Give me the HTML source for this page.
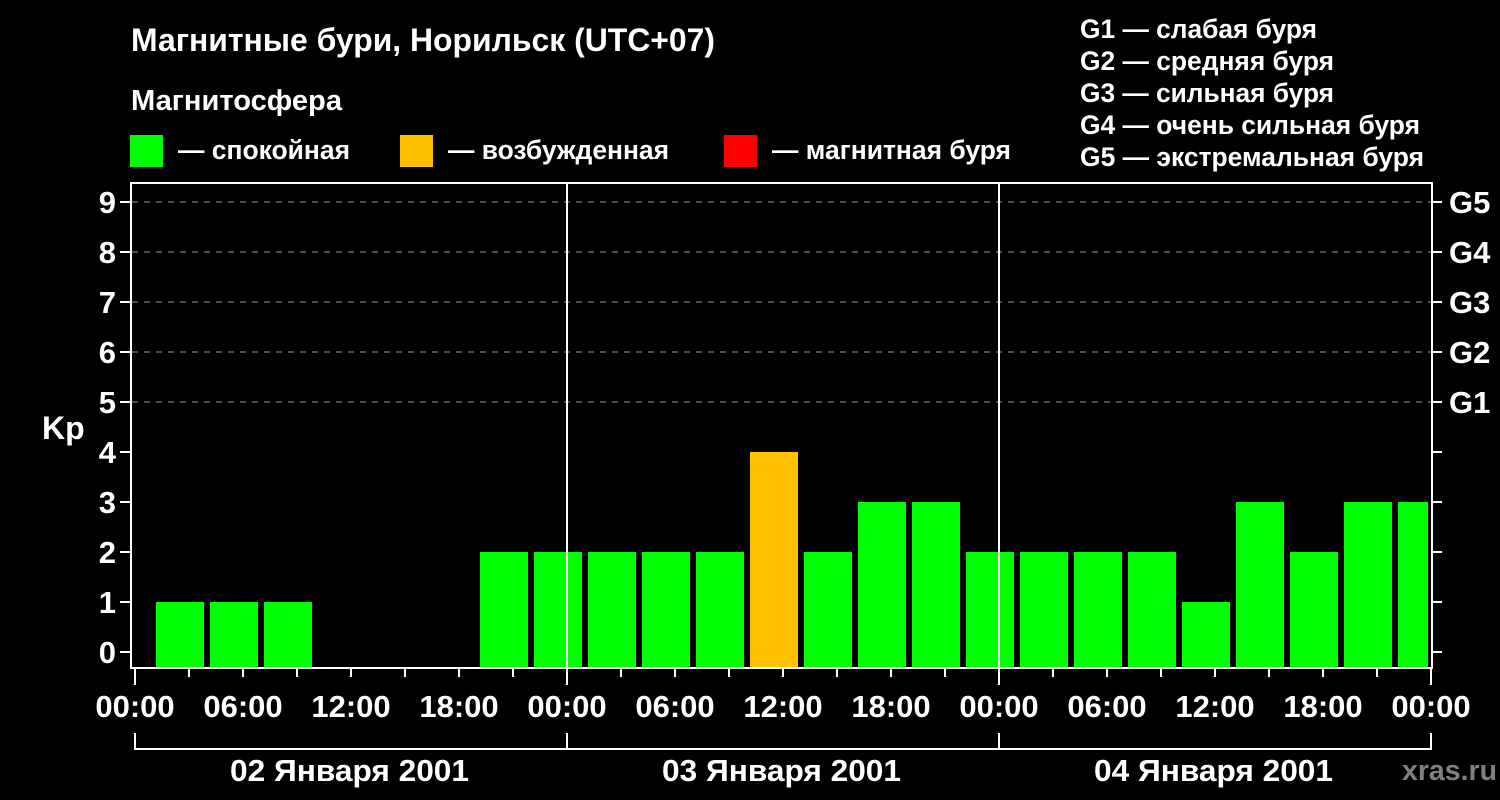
<!DOCTYPE html><html><head><meta charset="utf-8"><style>body{margin:0;background:#000}svg{display:block}text{font-family:"Liberation Sans",Arial,sans-serif;font-weight:bold;fill:#fff}</style></head><body>
<svg width="1500" height="800" viewBox="0 0 1500 800">
<rect width="1500" height="800" fill="#000"/>
<text x="131" y="51" font-size="32" textLength="584" lengthAdjust="spacingAndGlyphs">Магнитные бури, Норильск (UTC+07)</text>
<text x="131" y="110" font-size="29" textLength="211" lengthAdjust="spacingAndGlyphs">Магнитосфера</text>
<rect x="130" y="135" width="33" height="32" fill="#00ff00"/><text x="178" y="159" font-size="27" textLength="172" lengthAdjust="spacingAndGlyphs">— спокойная</text>
<rect x="400" y="135" width="33" height="32" fill="#ffc000"/><text x="448" y="159" font-size="27" textLength="221" lengthAdjust="spacingAndGlyphs">— возбужденная</text>
<rect x="724" y="135" width="33" height="32" fill="#ff0000"/><text x="772" y="159" font-size="27" textLength="239" lengthAdjust="spacingAndGlyphs">— магнитная буря</text>
<g font-size="27"><text x="1080" y="38" textLength="237" lengthAdjust="spacingAndGlyphs">G1 — слабая буря</text><text x="1080" y="70" textLength="254" lengthAdjust="spacingAndGlyphs">G2 — средняя буря</text><text x="1080" y="102" textLength="254" lengthAdjust="spacingAndGlyphs">G3 — сильная буря</text><text x="1080" y="134" textLength="340" lengthAdjust="spacingAndGlyphs">G4 — очень сильная буря</text><text x="1080" y="166" textLength="344" lengthAdjust="spacingAndGlyphs">G5 — экстремальная буря</text></g>
<g stroke="#999" stroke-width="1" stroke-dasharray="6,6"><line x1="132" y1="202" x2="1431" y2="202"/><line x1="132" y1="252" x2="1431" y2="252"/><line x1="132" y1="302" x2="1431" y2="302"/><line x1="132" y1="352" x2="1431" y2="352"/><line x1="132" y1="402" x2="1431" y2="402"/></g>
<g fill="#00ff00">
<rect x="156" y="602" width="48" height="66"/><rect x="210" y="602" width="48" height="66"/><rect x="264" y="602" width="48" height="66"/>
<rect x="480" y="552" width="48" height="116"/><rect x="534" y="552" width="48" height="116"/><rect x="588" y="552" width="48" height="116"/><rect x="642" y="552" width="48" height="116"/><rect x="696" y="552" width="48" height="116"/>
<rect x="804" y="552" width="48" height="116"/><rect x="858" y="502" width="48" height="166"/><rect x="912" y="502" width="48" height="166"/><rect x="966" y="552" width="48" height="116"/>
<rect x="1020" y="552" width="48" height="116"/><rect x="1074" y="552" width="48" height="116"/><rect x="1128" y="552" width="48" height="116"/><rect x="1182" y="602" width="48" height="66"/><rect x="1236" y="502" width="48" height="166"/><rect x="1290" y="552" width="48" height="116"/><rect x="1344" y="502" width="48" height="166"/><rect x="1398" y="502" width="30" height="166"/>
</g>
<rect x="750" y="452" width="48" height="216" fill="#ffc000"/>
<g stroke="#fff" stroke-width="2" fill="none">
<rect x="131" y="183" width="1301" height="485"/>
<line x1="567" y1="183" x2="567" y2="668"/><line x1="999" y1="183" x2="999" y2="668"/>
</g>
<g stroke="#fff" stroke-width="2">
<line x1="120" y1="202" x2="131" y2="202"/><line x1="120" y1="252" x2="131" y2="252"/><line x1="120" y1="302" x2="131" y2="302"/><line x1="120" y1="352" x2="131" y2="352"/><line x1="120" y1="402" x2="131" y2="402"/><line x1="120" y1="452" x2="131" y2="452"/><line x1="120" y1="502" x2="131" y2="502"/><line x1="120" y1="552" x2="131" y2="552"/><line x1="120" y1="602" x2="131" y2="602"/><line x1="120" y1="652" x2="131" y2="652"/>
<line x1="1432" y1="202" x2="1442" y2="202"/><line x1="1432" y1="252" x2="1442" y2="252"/><line x1="1432" y1="302" x2="1442" y2="302"/><line x1="1432" y1="352" x2="1442" y2="352"/><line x1="1432" y1="402" x2="1442" y2="402"/><line x1="1432" y1="452" x2="1442" y2="452"/><line x1="1432" y1="502" x2="1442" y2="502"/><line x1="1432" y1="552" x2="1442" y2="552"/><line x1="1432" y1="602" x2="1442" y2="602"/><line x1="1432" y1="652" x2="1442" y2="652"/>
<line x1="135" y1="668" x2="135" y2="685"/><line x1="567" y1="668" x2="567" y2="685"/><line x1="999" y1="668" x2="999" y2="685"/><line x1="1431" y1="668" x2="1431" y2="685"/>
<line x1="189" y1="668" x2="189" y2="677"/><line x1="243" y1="668" x2="243" y2="677"/><line x1="297" y1="668" x2="297" y2="677"/><line x1="351" y1="668" x2="351" y2="677"/><line x1="405" y1="668" x2="405" y2="677"/><line x1="459" y1="668" x2="459" y2="677"/><line x1="513" y1="668" x2="513" y2="677"/>
<line x1="621" y1="668" x2="621" y2="677"/><line x1="675" y1="668" x2="675" y2="677"/><line x1="729" y1="668" x2="729" y2="677"/><line x1="783" y1="668" x2="783" y2="677"/><line x1="837" y1="668" x2="837" y2="677"/><line x1="891" y1="668" x2="891" y2="677"/><line x1="945" y1="668" x2="945" y2="677"/>
<line x1="1053" y1="668" x2="1053" y2="677"/><line x1="1107" y1="668" x2="1107" y2="677"/><line x1="1161" y1="668" x2="1161" y2="677"/><line x1="1215" y1="668" x2="1215" y2="677"/><line x1="1269" y1="668" x2="1269" y2="677"/><line x1="1323" y1="668" x2="1323" y2="677"/><line x1="1377" y1="668" x2="1377" y2="677"/>
</g>
<g stroke="#fff" stroke-width="2" fill="none"><polyline points="135,733 135,749 1431,749 1431,733"/><line x1="567" y1="733" x2="567" y2="749"/><line x1="999" y1="733" x2="999" y2="749"/></g>
<g font-size="31" text-anchor="end"><text x="116" y="213">9</text><text x="116" y="263">8</text><text x="116" y="313">7</text><text x="116" y="363">6</text><text x="116" y="413">5</text><text x="116" y="463">4</text><text x="116" y="513">3</text><text x="116" y="563">2</text><text x="116" y="613">1</text><text x="116" y="663">0</text></g>
<text x="42" y="439" font-size="32">Kp</text>
<g font-size="31"><text x="1449" y="213">G5</text><text x="1449" y="263">G4</text><text x="1449" y="313">G3</text><text x="1449" y="363">G2</text><text x="1449" y="413">G1</text></g>
<g font-size="31" text-anchor="middle"><text x="135" y="717">00:00</text><text x="243" y="717">06:00</text><text x="351" y="717">12:00</text><text x="459" y="717">18:00</text><text x="567" y="717">00:00</text><text x="675" y="717">06:00</text><text x="783" y="717">12:00</text><text x="891" y="717">18:00</text><text x="999" y="717">00:00</text><text x="1107" y="717">06:00</text><text x="1215" y="717">12:00</text><text x="1323" y="717">18:00</text><text x="1431" y="717">00:00</text></g>
<g font-size="31"><text x="230" y="781" textLength="239" lengthAdjust="spacingAndGlyphs">02 Января 2001</text><text x="662" y="781" textLength="239" lengthAdjust="spacingAndGlyphs">03 Января 2001</text><text x="1094" y="781" textLength="239" lengthAdjust="spacingAndGlyphs">04 Января 2001</text></g>
<text x="1402" y="780" font-size="29" textLength="95" lengthAdjust="spacingAndGlyphs" style="fill:#808080">xras.ru</text>
</svg></body></html>
